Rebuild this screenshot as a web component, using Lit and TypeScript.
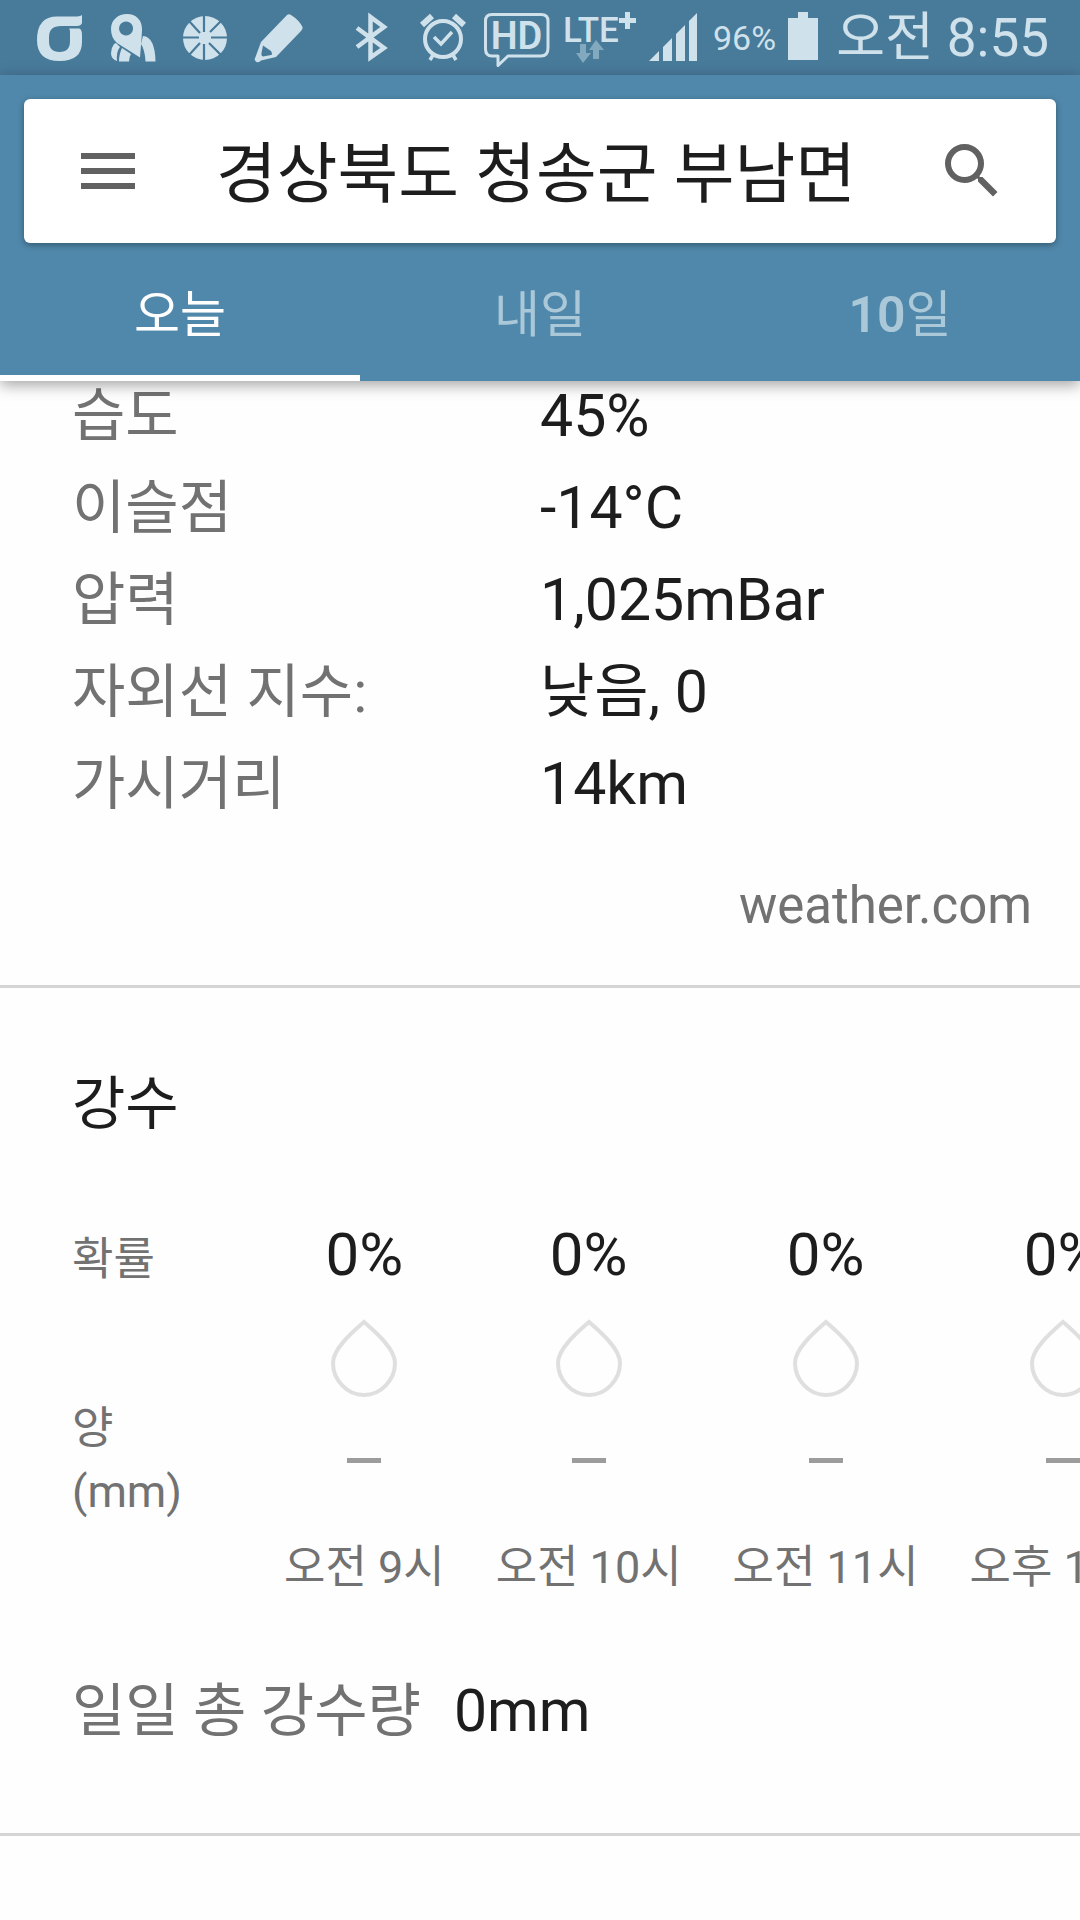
import { LitElement, html, svg, css } from "lit";
import { customElement, property, state } from "lit/decorators.js";

const FONT = css`Roboto, "Noto Sans CJK KR", sans-serif`;

@customElement("status-bar")
export class StatusBar extends LitElement {
  static styles = css`
    :host {
      display: block;
      font-family: ${FONT};
    }
    .bar {
      display: flex;
      justify-content: space-between;
      height: 75px;
      padding: 0 31px 0 36px;
      background: #487a9a;
      color: #cfe1ea;
    }
    .group {
      display: flex;
      align-items: center;
    }
    .notices {
      gap: 26px;
    }
    .system {
      gap: 12px;
    }
    svg {
      display: block;
      height: 75px;
      fill: currentColor;
    }
    .line {
      fill: none;
      stroke: currentColor;
    }
    .cut {
      fill: none;
      stroke: #487a9a;
    }
    .hole {
      fill: #487a9a;
    }
    .faint {
      fill: #83a9bf;
    }
    .percent {
      font-size: 34px;
      line-height: 80px;
    }
    .clock {
      margin-left: 6px;
      font-size: 53px;
      line-height: 78px;
    }
  `;

  render() {
    return html`
      <div class="bar">
        <div class="group notices">
          <svg width="48" viewBox="36 0 48 75" aria-hidden="true">
            <path d="M82 15V23Q81 26 77 26H61Q49 26 49 37V41Q49 52 59.500 52Q70 52 70 41V33Q70 29 69 28.500H79Q82 29 82 35V42Q82 61 59.500 61Q37 61 37 40Q37 16 58 16.500H74Q80 16.500 82 15Z"></path>
          </svg>
          <svg width="46" viewBox="110 0 46 75" aria-hidden="true">
            <path d="M143 36Q155 37 155.500 61.500H145.500Q145 50 141 44Z"></path>
            <path d="M114 44Q111 48 111 53Q111 59 117 61Q116 52 120 47L116 43Z"></path>
            <path d="M122 48L131 54Q129 57 129 61.500H119Q119 54 122 48Z"></path>
            <path fill-rule="evenodd" d="M111 29C111 20 118 14 127 14C136 14 142 20 142 29Q142 34 140 57.500L117 43Q111 38 111 29ZM126 21.500a7 7 0 1 0 .1 0Z"></path>
          </svg>
          <svg width="46" viewBox="182 0 46 75" aria-hidden="true">
            <circle cx="205" cy="38" r="22"></circle>
            <path class="cut" stroke-width="2.200" d="M204 15V32M204 44V61M182 37.500H199M211 37.500H228M189 21L200 33M209 43L221 55M221 21L210 32M200 43L189 55"></path>
          </svg>
          <svg width="50" viewBox="253 0 50 75" aria-hidden="true">
            <path d="M286 15Q288 13.500 290 15Q298 20 301.500 27Q302 29 300 31L275 57L260 60.500Q258 63 255.500 62Q252.500 60 254.500 57L260 42Z"></path>
            <path class="hole" d="M262 45.500L270 51Q272 55 270 55L262 56.500Q260 56 260.500 53Z"></path>
          </svg>
        </div>
        <div class="group system">
          <svg width="50" viewBox="350 0 50 75" role="img" aria-label="블루투스">
            <path class="line" stroke-width="4.500" d="M354 28L381 48L367.500 57.500V17L381 27L354 47"></path>
          </svg>
          <svg width="56" viewBox="412 0 56 75" role="img" aria-label="알람">
            <circle class="line" stroke-width="4" cx="440" cy="39" r="18"></circle>
            <path class="line" stroke-width="3.500" d="M431 37L438 44L449 32M430 55L427 60M450 55L453 60"></path>
            <path class="line" stroke-width="6" d="M419 25L429 16M461 25L451 16"></path>
          </svg>
          <svg width="68" viewBox="480 0 68 75" role="img" aria-label="HD">
            <path class="line" stroke-width="3" stroke-linejoin="round" d="M489 14.500H538Q545 14.500 545 21V48Q545 56 538 56H505L495 65.500V56H489Q482.500 56 482.500 49V21Q482.500 14.500 489 14.500Z"></path>
            <text x="513.500" y="49" text-anchor="middle" font-size="38" font-weight="600">HD</text>
          </svg>
          <svg width="74" viewBox="562 0 74 75" role="img" aria-label="LTE+">
            <text x="562" y="42" font-size="35" font-weight="500">LTE</text>
            <path d="M624 12h5v6h6v5h-6v6h-5v-6h-6v-5h6Z"></path>
            <path class="faint" d="M579 44h6v9h5l-8 10-7-10h4ZM592 59v-9h-4l7-10 8 10h-5v9Z"></path>
          </svg>
          <svg width="52" viewBox="647 0 52 75" role="img" aria-label="신호 세기">
            <path d="M647 61L657 51V61ZM661 61V47L670 38V61ZM674 61V34L683 25V61ZM687 61V21L695 13V61Z"></path>
          </svg>
          <span class="percent">96%</span>
          <svg width="30" viewBox="788 0 30 75" role="img" aria-label="배터리">
            <path d="M798 12H808V18H818V60H788V18H798Z"></path>
          </svg>
          <time class="clock">오전 8:55</time>
        </div>
      </div>
    `;
  }
}

@customElement("weather-header")
export class WeatherHeader extends LitElement {
  @property() place = "";
  @state() private active = 0;

  static styles = css`
    :host {
      display: block;
      font-family: ${FONT};
    }
    .header {
      padding-top: 24px;
      background: #5088ab;
      box-shadow: 0 4px 14px rgba(0, 0, 0, 0.36);
    }
    .card {
      display: flex;
      align-items: center;
      height: 144px;
      margin: 0 24px;
      padding: 0 48px;
      box-sizing: border-box;
      border-radius: 6px;
      background: #fff;
      box-shadow: 0 2px 6px rgba(0, 0, 0, 0.35);
    }
    .icon {
      flex: none;
      width: 72px;
      height: 72px;
      padding: 0;
      border: 0;
      background: none;
      color: #616161;
    }
    .icon svg {
      display: block;
      width: 72px;
      height: 72px;
      fill: currentColor;
    }
    .place {
      flex: 1;
      margin: 0 0 0 72px;
      padding-top: 8px;
      font-size: 66px;
      font-weight: 400;
      line-height: 84px;
      white-space: nowrap;
      color: #1d1d1d;
    }
    .tabs {
      display: grid;
      grid-template-columns: repeat(3, 1fr);
      height: 138px;
    }
    .tab {
      padding: 12px 0 0;
      border: 0;
      border-bottom: 6px solid transparent;
      background: none;
      font: 400 50px/60px ${FONT};
      color: #abc8d8;
    }
    .number {
      font-weight: 600;
    }
    .tab[aria-selected="true"] {
      border-bottom-color: #fff;
      color: #fff;
    }
  `;

  render() {
    const tabs = ["오늘", "내일", html`<span class="number">10</span>일`];
    return html`
      <header class="header">
        <div class="card">
          <button class="icon" aria-label="메뉴">
            <svg viewBox="0 0 24 24"><path d="M3 18h18v-2H3v2zm0-5h18v-2H3v2zm0-7v2h18V6H3z"></path></svg>
          </button>
          <h1 class="place">${this.place}</h1>
          <button class="icon" aria-label="검색">
            <svg viewBox="0 0 24 24"><path d="M15.500 14h-.79l-.28-.27A6.471 6.471 0 0 0 16 9.500 6.500 6.500 0 1 0 9.500 16c1.610 0 3.090-.59 4.230-1.570l.27.28v.79l5 4.990L20.490 19l-4.990-5zm-6 0C7.010 14 5 11.990 5 9.500S7.010 5 9.500 5 14 7.010 14 9.500 11.990 14 9.500 14z"></path></svg>
          </button>
        </div>
        <div class="tabs" role="tablist">
          ${tabs.map(
            (label, i) => html`
              <button
                class="tab"
                role="tab"
                aria-selected=${i === this.active ? "true" : "false"}
                @click=${() => (this.active = i)}
              >${label}</button>
            `
          )}
        </div>
      </header>
    `;
  }
}

const DETAILS = [
  ["습도", "45%"],
  ["이슬점", "-14°C"],
  ["압력", "1,025mBar"],
  ["자외선 지수:", "낮음, 0"],
  ["가시거리", "14km"],
];

const HOURS = ["오전 9시", "오전 10시", "오전 11시", "오후 12시"];

const drop = svg`<path d="M33 3C24 11 2 29 2 44C2 61 16 76 33 76C50 76 64 61 64 44C64 29 42 11 33 3Z"></path>`;

@customElement("app-root")
export class AppRoot extends LitElement {
  static styles = css`
    :host {
      display: block;
      min-height: 100vh;
      overflow: hidden;
      background: #fefefe;
      color: #1d1d1d;
      font-family: ${FONT};
    }
    .top {
      position: relative;
      z-index: 1;
    }
    .section {
      border-bottom: 3px solid #d5d5d5;
    }
    .details {
      display: grid;
      grid-template-columns: 1fr 1fr;
      align-items: baseline;
      row-gap: 22px;
      margin: 0;
    }
    .label {
      padding-left: 72px;
      font-size: 58px;
      line-height: 70px;
      color: #727272;
    }
    .value {
      margin: 0;
      font-size: 59px;
      line-height: 70px;
    }
    .source {
      display: flex;
      justify-content: flex-end;
      padding: 57px 48px 49px 0;
    }
    .link {
      font-size: 51px;
      line-height: 60px;
      color: #727272;
      text-decoration: none;
    }
    .title {
      margin: 0;
      padding: 80px 72px 0;
      font-size: 58px;
      font-weight: 400;
      line-height: 72px;
    }
    .scroller {
      overflow: hidden;
      padding: 75px 0 0 72px;
    }
    .hours {
      border-collapse: collapse;
      font-size: 45px;
      color: #727272;
      white-space: nowrap;
    }
    .hours th,
    .hours td {
      padding: 0 26px 0 25px;
      font-weight: 400;
      text-align: center;
      vertical-align: baseline;
    }
    .hours .head {
      min-width: 161px;
      padding-left: 0;
      text-align: left;
      line-height: 63px;
    }
    .chance {
      font-size: 60px;
      line-height: 80px;
      color: #1d1d1d;
    }
    .drop {
      display: block;
      width: 66px;
      height: 78px;
      margin: 24px auto 0;
      fill: none;
      stroke: #dfdfdf;
      stroke-width: 4;
    }
    .hours .amount {
      vertical-align: middle;
    }
    .dash {
      display: block;
      width: 34px;
      height: 5px;
      margin: 0 auto;
      background: #9c9c9c;
    }
    .hours .time {
      line-height: 90px;
    }
    .total {
      display: flex;
      align-items: baseline;
      gap: 33px;
      margin: 0;
      padding: 63px 72px 87px 0;
    }
  `;

  render() {
    return html`
      <div class="top">
        <status-bar></status-bar>
        <weather-header place="경상북도 청송군 부남면"></weather-header>
      </div>
      <main>
        <section class="section">
          <dl class="details">
            ${DETAILS.map(
              ([name, value]) => html`<dt class="label">${name}</dt><dd class="value">${value}</dd>`
            )}
          </dl>
          <div class="source"><a class="link" href="https://weather.com">weather.com</a></div>
        </section>
        <section class="section">
          <h2 class="title">강수</h2>
          <div class="scroller">
            <table class="hours">
              <tbody>
                <tr>
                  <th class="head" scope="row">확률</th>
                  ${HOURS.map(
                    () => html`<td><div class="chance">0%</div><svg class="drop" viewBox="0 0 66 78" aria-hidden="true">${drop}</svg></td>`
                  )}
                </tr>
                <tr>
                  <th class="head" scope="row">양<br />(mm)</th>
                  ${HOURS.map(() => html`<td class="amount"><span class="dash"></span></td>`)}
                </tr>
                <tr>
                  <td class="head"></td>
                  ${HOURS.map((h) => html`<th class="time" scope="col">${h}</th>`)}
                </tr>
              </tbody>
            </table>
          </div>
          <dl class="total">
            <dt class="label">일일 총 강수량</dt>
            <dd class="value">0mm</dd>
          </dl>
        </section>
      </main>
    `;
  }
}
